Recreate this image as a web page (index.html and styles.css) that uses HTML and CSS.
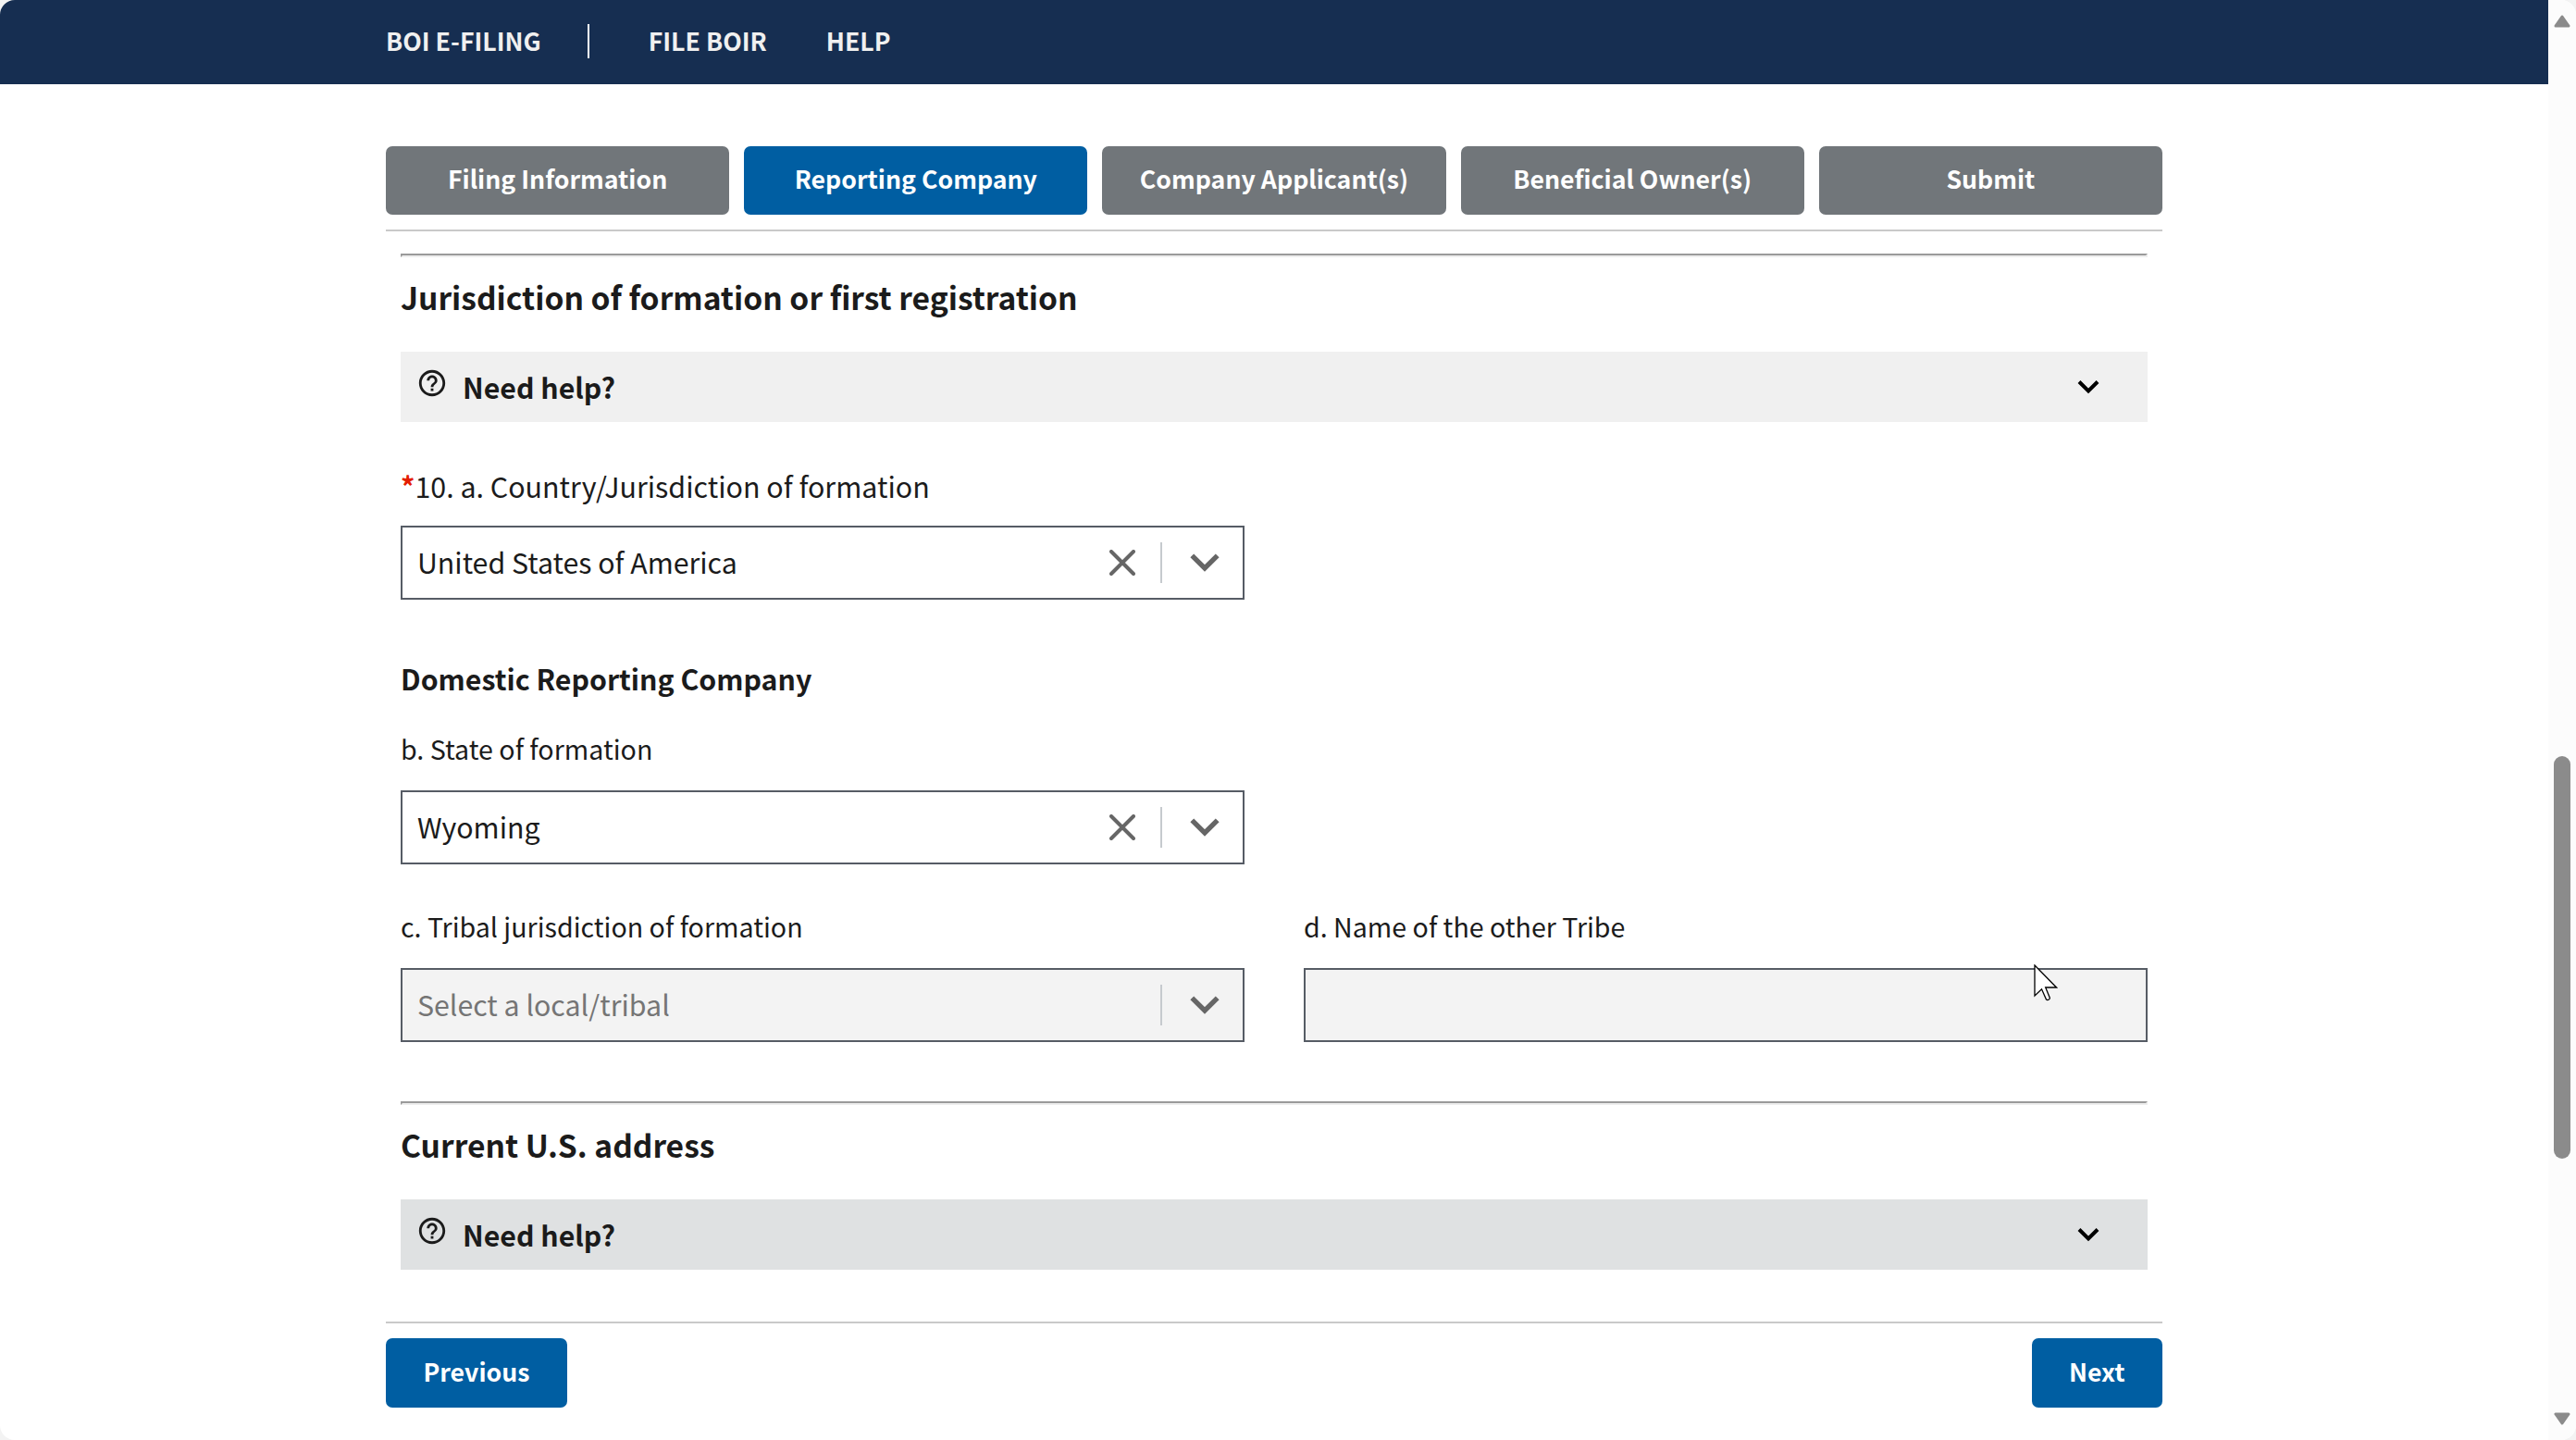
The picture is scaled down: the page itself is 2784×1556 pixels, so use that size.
FILE: index.html
```html
<!DOCTYPE html>
<html lang="en">
<head>
  <meta charset="UTF-8">
  <title>BOI E-Filing</title>
  <link rel="stylesheet" href="styles.css">
</head>
<body>
  <div class="window">
    <div class="page">
      <header class="header">
        <nav class="nav">
          <a href="#" class="brand">BOI E-FILING</a>
          <a href="#">FILE BOIR</a>
          <a href="#">HELP</a>
        </nav>
      </header>

      <main class="main">
        <div class="steps">
          <button class="step">Filing Information</button>
          <button class="step active">Reporting Company</button>
          <button class="step">Company Applicant(s)</button>
          <button class="step">Beneficial Owner(s)</button>
          <button class="step">Submit</button>
        </div>

        <form class="form">
          <hr>
          <h2>Jurisdiction of formation or first registration</h2>
          <div class="help">
            <svg class="help-icon" viewBox="0 0 24 24"><path d="M11 18h2v-2h-2v2zm1-16C6.480 2 2 6.480 2 12s4.480 10 10 10 10-4.480 10-10S17.520 2 12 2zm0 18c-4.410 0-8-3.590-8-8s3.590-8 8-8 8 3.590 8 8-3.590 8-8 8zm0-14c-2.210 0-4 1.790-4 4h2c0-1.100.9-2 2-2s2 .9 2 2c0 2-3 1.750-3 5h2c0-2.250 3-2.500 3-5 0-2.210-1.790-4-4-4z"/></svg>
            <span>Need help?</span>
            <svg class="help-arrow" viewBox="0 0 24 16"><path d="M2 2.500l10 10 10-10"/></svg>
          </div>

          <label class="label first-label"><span class="required">*</span>10. a. Country/Jurisdiction of formation</label>
          <div class="select">
            <span class="value">United States of America</span>
            <svg class="clear" viewBox="0 0 28 28"><path d="M2 2l24 24M26 2L2 26"/></svg>
            <span class="separator"></span>
            <svg class="arrow" viewBox="0 0 32 20"><path d="M2.300 2.300L16 16l13.700-13.700"/></svg>
          </div>

          <h3>Domestic Reporting Company</h3>
          <label class="label">b. State of formation</label>
          <div class="select">
            <span class="value">Wyoming</span>
            <svg class="clear" viewBox="0 0 28 28"><path d="M2 2l24 24M26 2L2 26"/></svg>
            <span class="separator"></span>
            <svg class="arrow" viewBox="0 0 32 20"><path d="M2.300 2.300L16 16l13.700-13.700"/></svg>
          </div>

          <div class="row">
            <div class="field">
              <label class="label">c. Tribal jurisdiction of formation</label>
              <div class="select disabled">
                <span class="value">Select a local/tribal</span>
                <span class="separator"></span>
                <svg class="arrow" viewBox="0 0 32 20"><path d="M2.300 2.300L16 16l13.700-13.700"/></svg>
              </div>
            </div>
            <div class="field">
              <label class="label">d. Name of the other Tribe</label>
              <input type="text" class="select disabled" disabled>
            </div>
          </div>

          <hr>
          <h2>Current U.S. address</h2>
          <div class="help dark">
            <svg class="help-icon" viewBox="0 0 24 24"><path d="M11 18h2v-2h-2v2zm1-16C6.480 2 2 6.480 2 12s4.480 10 10 10 10-4.480 10-10S17.520 2 12 2zm0 18c-4.410 0-8-3.590-8-8s3.590-8 8-8 8 3.590 8 8-3.590 8-8 8zm0-14c-2.210 0-4 1.790-4 4h2c0-1.100.9-2 2-2s2 .9 2 2c0 2-3 1.750-3 5h2c0-2.250 3-2.500 3-5 0-2.210-1.790-4-4-4z"/></svg>
            <span>Need help?</span>
            <svg class="help-arrow" viewBox="0 0 24 16"><path d="M2 2.500l10 10 10-10"/></svg>
          </div>
        </form>

        <footer class="footer">
          <button class="btn">Previous</button>
          <button class="btn">Next</button>
        </footer>
      </main>
    </div>

    <div class="scrollbar">
      <svg class="scroll-arrow" viewBox="0 0 18 14"><path d="M9 2L16 12H2z"/></svg>
      <div class="thumb"></div>
      <svg class="scroll-arrow" viewBox="0 0 18 14"><path d="M9 12L2 2h14z"/></svg>
    </div>

    <svg class="cursor" viewBox="0 0 26 40"><path d="M1 1v33l7.500-7.200 5 11.200c1.500 1.200 4 0 3.800-1.800L12.700 25H24.500z"/></svg>
  </div>
</body>
</html>
```
FILE: styles.css
```css
* {
  box-sizing: border-box;
}
body {
  margin: 0;
  background-color: #f3f3f3;
  color: #1b1b1b;
  font-family: "Noto Sans CJK SC", "Noto Sans CJK JP", sans-serif;
  font-size: 28.6px;
  line-height: 40px;
}
.window {
  display: flex;
  position: relative;
  width: 2784px;
  height: 1556px;
  overflow: hidden;
  background-color: #fff;
  border-radius: 16px;
}
.page {
  flex: 1;
}

/* top bar */
.header {
  height: 91px;
  padding: 24px 0 0 417px;
  background-color: #162e51;
}
.nav {
  display: flex;
  align-items: center;
  gap: 64px;
}
.nav a {
  color: #f0f0f0;
  font-size: 26.7px;
  font-weight: bold;
  text-decoration: none;
}
.nav .brand {
  display: flex;
  align-items: center;
}
.nav .brand::after {
  content: "";
  width: 2px;
  height: 37px;
  margin-left: 50px;
  background-color: #fff;
}

.main {
  width: 1920px;
  margin-left: 417px;
  padding-top: 67px;
}
.steps {
  display: grid;
  grid-template-columns: repeat(5, 1fr);
  gap: 16px;
  padding-bottom: 16px;
  border-bottom: 2px solid #c9c9c9;
}
.step, .btn {
  height: 74px;
  padding: 0 0 5px;
  border: none;
  border-radius: 7px;
  background-color: #71767a;
  color: #fff;
  font-family: inherit;
  font-size: 26.7px;
  font-weight: bold;
}
.step.active, .btn {
  background-color: #005ea2;
}

/* form */
.form {
  padding: 24px 16px 56px;
}
hr {
  margin: 0;
  border: 2px solid;
  border-color: #9a9a9a #eee #eee #9a9a9a;
}
h2 {
  margin: 23px 0 39px;
  font-size: 33.6px;
  line-height: 40px;
}
h3 {
  margin: 65px 0 36px;
  font-size: 30.3px;
  line-height: 40px;
}
.help {
  display: flex;
  align-items: center;
  height: 76px;
  padding: 0 52px 0 17px;
  background-color: #f0f0f0;
  font-size: 30.3px;
  font-weight: bold;
}
.help.dark {
  background-color: #dfe1e2;
}
.help-icon {
  width: 34px;
  height: 34px;
  margin: 0 16px 8px 0;
  fill: #1b1b1b;
}
.help-arrow {
  width: 24px;
  height: 16px;
  margin-left: auto;
  fill: none;
  stroke: #000;
  stroke-width: 4;
}
.label {
  display: block;
  margin-bottom: 25px;
}
.first-label {
  margin: 49px 0 23px;
  font-size: 30.4px;
}
.required {
  color: #e41d02;
  font-weight: bold;
}
.select {
  display: flex;
  align-items: center;
  width: 912px;
  height: 80px;
  padding: 0 25px 0 16px;
  border: 2px solid #565c65;
  font-size: 30.3px;
}
.select.disabled {
  background-color: #f3f3f3;
  color: #757575;
}
.value {
  flex: 1;
  padding-bottom: 2px;
}
.clear {
  width: 28px;
  height: 28px;
  fill: none;
  stroke: #666;
  stroke-width: 4;
  stroke-linecap: round;
}
.separator {
  width: 2px;
  height: 44px;
  margin: 0 30px 0 27px;
  background-color: #c6cace;
}
.arrow {
  width: 32px;
  height: 20px;
  fill: none;
  stroke: #666;
  stroke-width: 5.4;
}
.row {
  display: grid;
  grid-template-columns: 912px 912px;
  gap: 64px;
  margin: 47px 0 64px;
}

.footer {
  display: flex;
  justify-content: space-between;
  padding-top: 16px;
  border-top: 2px solid #c9c9c9;
}
.btn {
  height: 75px;
  padding: 0 40.5px 4px;
}

/* window scrollbar */
.scrollbar {
  display: flex;
  flex-direction: column;
  align-items: center;
  justify-content: space-between;
  width: 30px;
  padding: 16px 0;
  background-color: #fcfcfc;
}
.scroll-arrow {
  width: 18px;
  height: 14px;
  fill: #8b8b8b;
  stroke: #8b8b8b;
  stroke-width: 3;
  stroke-linejoin: round;
}
.thumb {
  width: 18px;
  height: 435px;
  margin-top: 513px;
  border-radius: 9px;
  background-color: #8b8b8b;
}
.cursor {
  position: absolute;
  left: 2198px;
  top: 1042px;
  width: 26px;
  height: 40px;
  fill: #fff;
  stroke: #000;
  stroke-width: 1.3;
}
```
